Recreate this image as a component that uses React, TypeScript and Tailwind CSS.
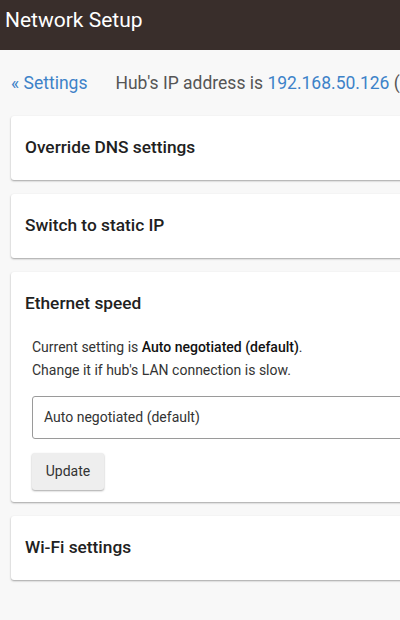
const FONT = { fontFamily: "Roboto, 'Noto Sans', sans-serif" };

function Card({ title, children }: { title: string; children?: React.ReactNode }) {
  return (
    <section className="rounded-[3px] bg-white px-[14px] pt-[20px] pb-[21px] shadow-[0_1px_2px_rgba(0,0,0,0.35)]">
      <h2 className="text-[17.3px] font-medium leading-[23px] text-[#212121]">{title}</h2>
      {children}
    </section>
  );
}

export default function App() {
  return (
    <div className="h-[620px] w-full overflow-hidden bg-[#f8f8f8]" style={FONT}>
      <div className="w-[640px]">
        <header className="h-[50px] bg-[#392e2b] px-[5px] pt-[8px]">
          <h1 className="text-[21px] leading-[24px] text-white">Network Setup</h1>
        </header>

        <div className="flex h-[66px] items-center gap-[28px] px-[11px] text-[17.5px]">
          <a href="#" className="text-[#3d82c8]">« Settings</a>
          <p className="whitespace-nowrap text-[#555]">
            Hub's IP address is <span className="text-[#3d82c8]">192.168.50.126</span> (Ethernet)
          </p>
        </div>

        <div className="flex flex-col gap-[14px] pl-[11px]">
          <Card title="Override DNS settings" />
          <Card title="Switch to static IP" />
          <section className="rounded-[3px] bg-white px-[14px] pt-[20px] pb-[12px] shadow-[0_1px_2px_rgba(0,0,0,0.35)]">
            <h2 className="text-[17.3px] font-medium leading-[23px] text-[#212121]">Ethernet speed</h2>
            <div className="mt-[21px] pl-[7px] text-[14px] leading-[23px] text-[#333]">
              <p>
                Current setting is <b className="font-medium text-[#111]">Auto negotiated (default)</b>.
              </p>
              <p>Change it if hub's LAN connection is slow.</p>
              <div className="mt-[14px] flex h-[43px] items-center rounded-[3px] border border-[#9a9a9a] px-[11px] text-[#333]">
                Auto negotiated (default)
              </div>
              <button className="mt-[14px] h-[37px] w-[72px] rounded-[3px] bg-[#eeeeee] text-[14px] text-[#333] shadow-[0_1px_2px_rgba(0,0,0,0.35)]">
                Update
              </button>
            </div>
          </section>
          <Card title="Wi-Fi settings" />
        </div>
      </div>
    </div>
  );
}
